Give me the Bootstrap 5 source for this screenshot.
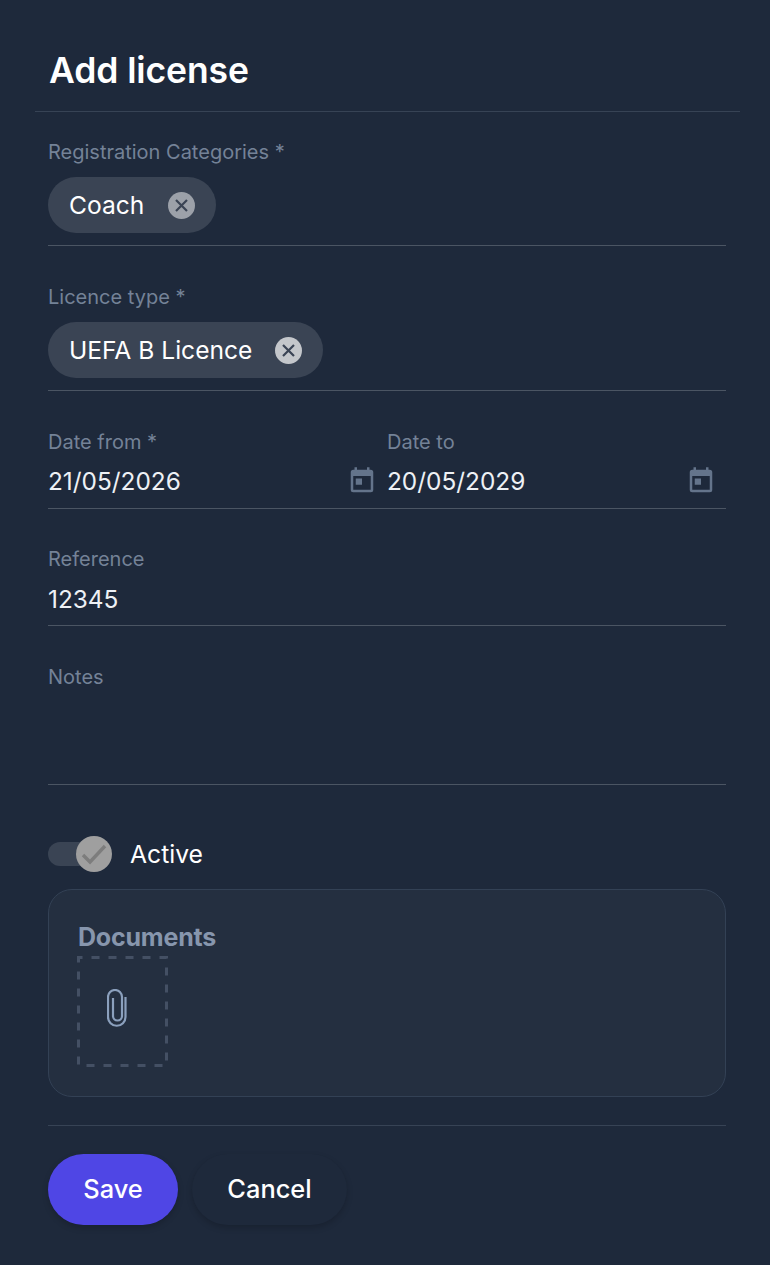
<!DOCTYPE html>
<html lang="en">
<head>
<meta charset="utf-8">
<title>Add license</title>
<link rel="stylesheet" href="https://cdn.jsdelivr.net/npm/bootstrap@5.3.0/dist/css/bootstrap.min.css">
<style>
html,body{height:100%}
body{background:#1e293b;color:#fff;font-family:Inter,"Noto Sans",sans-serif;overflow:hidden}
.sheet{padding:0 44px 0 48px;width:770px}
.head-zone{margin:0 -14px 0 -13px;padding:50px 14px 0 14px;height:112px;border-bottom:1px solid #374355}
.head-zone h1{font-size:35.5px;line-height:42px;font-weight:600;margin:0;letter-spacing:-.1px}
.fld{border-bottom:1px solid #4b5563;position:relative}
.fld-lbl{display:block;font-size:20px;line-height:24px;color:#748297}
.fld-val{font-size:24.4px;line-height:30px;color:#eef1f5}
.f-a{height:134px;padding-top:28px}
.f-b{height:145px;padding-top:39px}
.f-c{height:118px;padding-top:39px}
.f-d{height:117px;padding-top:38px}
.f-e{height:159px;padding-top:39px}
.f-a .fld-lbl{margin-bottom:13px}
.f-b .fld-lbl{margin-bottom:13px}
.f-c .fld-lbl{margin-bottom:12px}
.f-d .fld-lbl{margin-bottom:13px}
.chippy{height:56px;border-radius:28px;background:#3a4454;padding:0 21px 0 21px;font-size:24.6px;gap:23px;color:#fff}
.chip-roomy{gap:24px}
.chip-word{padding-top:1px}
.chip-x{width:27px;height:27px;flex:none}
.date-one{width:339px;padding-right:10px}
.cal{width:30px;height:30px;flex:none}
.switch-row{margin-top:49px;height:42px;font-size:24.7px}
.trk{width:46px;height:24px;border-radius:12px;background:#3a4454;position:relative;flex:none;margin-bottom:2px}
.knob{position:absolute;right:-18px;top:-6px;width:36px;height:36px;border-radius:50%;background:#9f9f9f;display:flex;align-items:center;justify-content:center}
.active-word{margin-left:36px}
.docs{margin-top:13px;height:208px;border:1px solid #334155;border-radius:24px;background:#242f40;padding:31px 28px}
.docs h2{font-size:25px;line-height:32px;font-weight:700;color:#8796ad;margin:0 0 3px;letter-spacing:-.2px;padding-left:1px}
.drop{width:91px;height:111px;position:relative;display:flex;align-items:center;justify-content:center;padding-right:12px;padding-bottom:7px}
.drop-edge{position:absolute;left:0;top:0}
.bar-line{border-top:1px solid #374355;margin-top:28px;padding-top:28px;gap:14px}
.act{height:71px;border-radius:36px;font-size:25.4px;font-weight:500;color:#fff;border:0;box-shadow:0 3px 6px rgba(0,0,0,.18)}
.act-s{width:130px;background:#4f46e5}
.act-c{width:155px;background:#1e293b}
.act:hover{color:#fff}
.act-s:hover{background:#4f46e5}
.act-c:hover{background:#1e293b}
</style>
</head>
<body>
<div class="sheet">
  <div class="head-zone"><h1>Add license</h1></div>

  <div class="fld f-a">
    <label class="fld-lbl">Registration Categories *</label>
    <div class="d-inline-flex align-items-center chippy chip-roomy"><span class="chip-word">Coach</span>
      <svg class="chip-x" viewBox="0 0 27 27"><circle cx="13.5" cy="13.5" r="13.5" fill="#9ca1a9"/><path d="M8 8l11 11M19 8L8 19" stroke="#3a4454" stroke-width="2.2" fill="none"/></svg>
    </div>
  </div>

  <div class="fld f-b">
    <label class="fld-lbl">Licence type *</label>
    <div class="d-inline-flex align-items-center chippy"><span class="chip-word">UEFA B Licence</span>
      <svg class="chip-x" viewBox="0 0 27 27"><circle cx="13.5" cy="13.5" r="13.5" fill="#c4c7cb"/><path d="M8 8l11 11M19 8L8 19" stroke="#3a4454" stroke-width="2.2" fill="none"/></svg>
    </div>
  </div>

  <div class="fld f-c d-flex">
    <div class="date-one">
      <label class="fld-lbl">Date from *</label>
      <div class="d-flex align-items-center justify-content-between">
        <span class="fld-val">21/05/2026</span>
        <svg class="cal" viewBox="0 0 24 24"><path fill="#64748b" d="M19 3h-1V1h-2v2H8V1H6v2H5a2 2 0 0 0-2 2v14a2 2 0 0 0 2 2h14a2 2 0 0 0 2-2V5a2 2 0 0 0-2-2zm0 16H5V8h14v11zM7 10h5v5H7z"/></svg>
      </div>
    </div>
    <div class="date-one">
      <label class="fld-lbl">Date to</label>
      <div class="d-flex align-items-center justify-content-between">
        <span class="fld-val">20/05/2029</span>
        <svg class="cal" viewBox="0 0 24 24"><path fill="#64748b" d="M19 3h-1V1h-2v2H8V1H6v2H5a2 2 0 0 0-2 2v14a2 2 0 0 0 2 2h14a2 2 0 0 0 2-2V5a2 2 0 0 0-2-2zm0 16H5V8h14v11zM7 10h5v5H7z"/></svg>
      </div>
    </div>
  </div>

  <div class="fld f-d">
    <label class="fld-lbl">Reference</label>
    <div class="fld-val">12345</div>
  </div>

  <div class="fld f-e">
    <label class="fld-lbl">Notes</label>
  </div>

  <div class="d-flex align-items-center switch-row">
    <span class="trk"><span class="knob"><svg width="30" height="24" viewBox="0 0 30 24"><path d="M4 13l7 7L26 4" stroke="#7d7d7d" stroke-width="3.4" fill="none"/></svg></span></span>
    <span class="active-word">Active</span>
  </div>

  <div class="docs">
    <h2>Documents</h2>
    <div class="drop">
      <svg class="drop-edge" width="91" height="111" viewBox="0 0 91 111"><rect x="1.5" y="1.5" width="88" height="108" fill="none" stroke="#445064" stroke-width="3" stroke-dasharray="8 9" stroke-dashoffset="4"/></svg>
      <svg width="20" height="38" viewBox="0 0 20 38"><path d="M18.5 8V28a8.75 8.75 0 0 1-17.5 0V8a7 7 0 0 1 14 0V27a4.5 4.5 0 0 1-9 0V9" stroke="#8ba0bd" stroke-width="2.2" fill="none"/></svg>
    </div>
  </div>

  <div class="d-flex bar-line">
    <button type="button" class="btn act act-s">Save</button>
    <button type="button" class="btn act act-c">Cancel</button>
  </div>
</div>
</body>
</html>
